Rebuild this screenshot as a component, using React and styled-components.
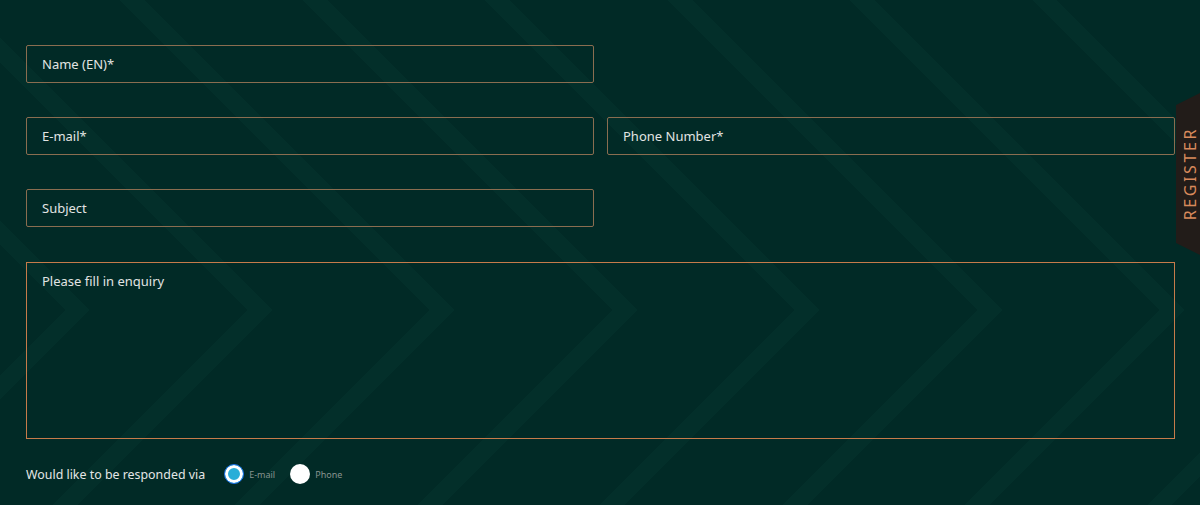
import * as React from "react";
import styled, { createGlobalStyle } from "styled-components";

const GlobalStyle = createGlobalStyle`
  html, body {
    margin: 0;
    padding: 0;
    background: #012a26;
  }
  * {
    box-sizing: border-box;
  }
`;

const ContactForm = () => {
  return (
    <Page>
      <GlobalStyle />
      <Form onSubmit={(e) => e.preventDefault()}>
        <Field type="text" placeholder="Name (EN)*" />
        <Spacer />
        <Field type="email" placeholder="E-mail*" />
        <Field type="tel" placeholder="Phone Number*" />
        <Field type="text" placeholder="Subject" />
        <Spacer />
        <Enquiry placeholder="Please fill in enquiry" />
        <ReplyRow>
          <ReplyLabel>Would like to be responded via</ReplyLabel>
          <RadioOption>
            <Radio type="radio" name="reply" defaultChecked />
            <RadioText>E-mail</RadioText>
          </RadioOption>
          <RadioOption>
            <Radio type="radio" name="reply" />
            <RadioText>Phone</RadioText>
          </RadioOption>
        </ReplyRow>
      </Form>
      <RegisterTab>
        <RegisterText>REGISTER</RegisterText>
      </RegisterTab>
    </Page>
  );
};

export default ContactForm;

const stripes = `
  transparent 0,
  transparent 46px,
  #032f2a 46px,
  #032f2a 63.6px,
  transparent 63.6px,
  transparent 129px
`;

const Page = styled.div`
  position: relative;
  min-height: 505px;
  padding: 45px 25px 0 26px;
  overflow: hidden;
  background-color: #012a26;
  background-image: repeating-linear-gradient(45deg, ${stripes}),
    repeating-linear-gradient(135deg, ${stripes});
  background-size: 100% 310px, 100% calc(100% - 310px);
  background-position: 0 0, 0 310px;
  background-repeat: no-repeat;
  font-family: "Noto Sans", "Open Sans", sans-serif;
`;

const Form = styled.form`
  display: grid;
  grid-template-columns: repeat(2, minmax(0, 1fr));
  column-gap: 13px;
  row-gap: 34px;
`;

const Spacer = styled.div``;

const Field = styled.input`
  width: 100%;
  height: 38px;
  padding: 0 15px;
  border: 1px solid #8a6d50;
  border-radius: 2px;
  background: transparent;
  font-family: "Noto Sans", "Open Sans", sans-serif;
  font-size: 13px;
  color: #e6e6e6;
  outline: none;

  &::placeholder {
    color: #e2e4e3;
    opacity: 1;
  }
`;

const Enquiry = styled.textarea`
  grid-column: span 2;
  width: 100%;
  height: 177px;
  margin-top: 1px;
  padding: 9px 15px;
  border: 1px solid #c67b4a;
  border-radius: 0;
  background: transparent;
  font-family: "Noto Sans", "Open Sans", sans-serif;
  font-size: 13px;
  line-height: 18px;
  color: #e6e6e6;
  resize: none;
  outline: none;

  &::placeholder {
    color: #e2e4e3;
    opacity: 1;
  }
`;

const ReplyRow = styled.div`
  grid-column: span 2;
  display: flex;
  align-items: center;
  margin-top: -11px;
  height: 24px;
`;

const ReplyLabel = styled.span`
  margin-right: 19px;
  font-size: 12.4px;
  color: #e4e6e5;
`;

const RadioOption = styled.label`
  display: flex;
  align-items: center;
  margin-right: 15px;
  cursor: pointer;
`;

const Radio = styled.input`
  appearance: none;
  width: 20px;
  height: 20px;
  margin: 0 5px 0 0;
  border-radius: 50%;
  background: #ffffff;
  cursor: pointer;

  &:checked {
    background: #2aaed8;
    border: 1.5px solid #1f72e6;
    box-shadow: inset 0 0 0 3px #ffffff;
  }
`;

const RadioText = styled.span`
  font-size: 9px;
  color: #87938f;
`;

const RegisterTab = styled.div`
  position: absolute;
  top: 93px;
  right: 0;
  width: 24px;
  height: 162px;
  padding-right: 2px;
  display: flex;
  align-items: center;
  justify-content: flex-end;
  background: #221c19;
  clip-path: polygon(0 12px, 100% 0, 100% 100%, 0 calc(100% - 12px));
`;

const RegisterText = styled.span`
  writing-mode: vertical-rl;
  transform: rotate(180deg);
  font-size: 16px;
  line-height: 16px;
  letter-spacing: 2.6px;
  color: #d88a5c;
`;
